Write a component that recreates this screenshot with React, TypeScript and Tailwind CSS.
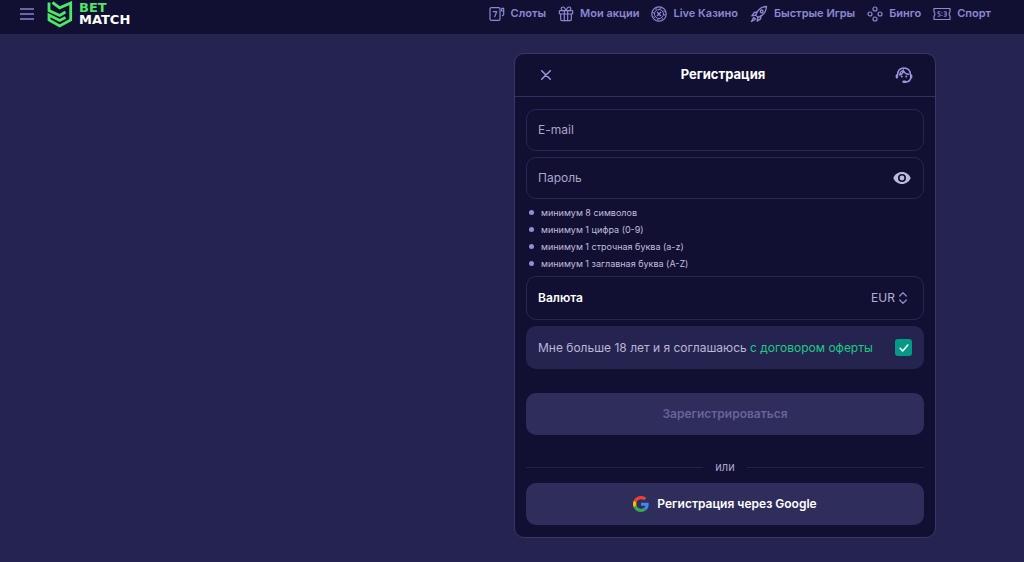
import { useState } from "react";
import type { ReactNode } from "react";

interface NavItem {
  label: string;
  icon: ReactNode;
}

function Icon({ children, className }: { children: ReactNode; className: string }) {
  return (
    <svg
      viewBox="0 0 24 24"
      fill="none"
      stroke="currentColor"
      strokeWidth="1.8"
      strokeLinecap="round"
      strokeLinejoin="round"
      aria-hidden="true"
      className={`shrink-0 ${className}`}
    >
      {children}
    </svg>
  );
}

const SlotsIcon = () => (
  <Icon className="size-4">
    <rect x="1.500" y="2.500" width="15" height="19" rx="2" />
    <path d="M6.500 8.500H11.500L8.500 16" />
    <path d="M20 14.500l2-1.500V3.500h-3v4h3" />
  </Icon>
);

const GiftIcon = () => (
  <Icon className="size-4">
    <rect x="2" y="7" width="20" height="5" rx="1" />
    <path d="M4 12v8a2 2 0 0 0 2 2h12a2 2 0 0 0 2-2v-8M9.500 7v15M14.500 7v15" />
    <path d="M12 7C10.500 3 9 1.500 7.500 1.500a2.700 2.700 0 0 0 0 5.500M12 7c1.500-4 3-5.500 4.500-5.500a2.700 2.700 0 0 1 0 5.500" />
  </Icon>
);

const ChipIcon = () => (
  <Icon className="size-4">
    <circle cx="12" cy="12" r="10.800" />
    <circle cx="12" cy="12" r="8.700" strokeWidth="1.500" strokeDasharray="2.500 4.330" strokeLinecap="butt" />
    <circle cx="12" cy="12" r="6.800" strokeWidth="1.500" />
    <path d="M9.500 9.500l5 5M14.500 9.500l-5 5" strokeWidth="2" />
  </Icon>
);

const RocketIcon = () => (
  <Icon className="size-[18px]">
    <path d="M7.500 13.500C9.500 7.500 14 2.500 22 2 21.500 10 16.500 14.500 10.500 16.500z" />
    <circle cx="15.500" cy="8.500" r="1.800" />
    <path d="M9.500 9.500L5.500 10 2.500 14.500l5-1M14.500 14.500L14 18.500 9.500 21.500l1-5" />
    <path d="M5 16.500L2 22l5.500-3z" />
  </Icon>
);

const BingoIcon = () => (
  <Icon className="size-4">
    <circle cx="12" cy="4.500" r="3" />
    <circle cx="4.500" cy="12" r="3" />
    <circle cx="19.500" cy="12" r="3" />
    <circle cx="12" cy="19.500" r="3" />
  </Icon>
);

const SportIcon = () => (
  <svg viewBox="0 0 18 14" fill="none" stroke="currentColor" aria-hidden="true" className="h-3.5 w-[18px] shrink-0">
    <path d="M1 1.500h16v3.500c-1.200.6-1.200 3.400 0 4v3.500H1V9c1.200-.6 1.200-3.400 0-4z" strokeWidth="1.200" />
    <path d="M7.300 4.800H5v2h1.300q1 0 1 1.200T6.300 9.200H4.800M10.800 4.800h2.400v4.400h-2.400M11.300 7h1.900" strokeWidth="1" />
    <path d="M9 5.300v1M9 8v1" strokeWidth="1" />
  </svg>
);

const SupportIcon = () => (
  <svg viewBox="0 0 24 24" fill="none" stroke="currentColor" strokeLinecap="round" aria-hidden="true" className="size-[18px]">
    <path d="M3.500 12C3 6 7 2.500 12 2.500S21 6 20.500 12" strokeWidth="2" />
    <path d="M2.500 12.500v2.500M21.500 12.500v2.500" strokeWidth="3.200" />
    <path d="M21 16c-.8 3.500-3.500 5.300-7 5.300" strokeWidth="2" />
    <path d="M11.500 21h2" strokeWidth="3.400" />
    <path d="M6.300 12C9.500 11 11 9 11.300 6.200 12.500 9 15 10.800 18 11M6.300 12c.2-3.500 2-5.600 5-5.800" strokeWidth="1.800" />
    <circle cx="9" cy="14" r="1.300" fill="currentColor" stroke="none" />
    <circle cx="15" cy="14" r="1.300" fill="currentColor" stroke="none" />
  </svg>
);

const GoogleIcon = () => (
  <svg viewBox="0 0 48 48" aria-hidden="true" className="size-4">
    <path fill="#EA4335" d="M24 9.500c3.540 0 6.710 1.220 9.210 3.600l6.850-6.850C35.900 2.380 30.470 0 24 0 14.620 0 6.510 5.380 2.560 13.220l7.980 6.190C12.430 13.720 17.740 9.500 24 9.500z" />
    <path fill="#4285F4" d="M46.980 24.550c0-1.570-.15-3.090-.38-4.550H24v9.020h12.940c-.58 2.960-2.260 5.480-4.780 7.180l7.730 6c4.510-4.180 7.090-10.360 7.090-17.650z" />
    <path fill="#FBBC05" d="M10.530 28.590c-.48-1.450-.76-2.990-.76-4.590s.27-3.140.76-4.590l-7.980-6.190C.92 16.460 0 20.120 0 24c0 3.880.92 7.540 2.560 10.780l7.970-6.190z" />
    <path fill="#34A853" d="M24 48c6.480 0 11.930-2.130 15.890-5.810l-7.730-6c-2.150 1.450-4.920 2.300-8.160 2.300-6.260 0-11.570-4.220-13.470-9.910l-7.980 6.190C6.510 42.620 14.620 48 24 48z" />
  </svg>
);

const navItems: NavItem[] = [
  { label: "Слоты", icon: <SlotsIcon /> },
  { label: "Мои акции", icon: <GiftIcon /> },
  { label: "Live Казино", icon: <ChipIcon /> },
  { label: "Быстрые Игры", icon: <RocketIcon /> },
  { label: "Бинго", icon: <BingoIcon /> },
  { label: "Спорт", icon: <SportIcon /> },
];

const passwordRules = [
  "минимум 8 символов",
  "минимум 1 цифра (0-9)",
  "минимум 1 строчная буква (a-z)",
  "минимум 1 заглавная буква (A-Z)",
];

function Header() {
  return (
    <header className="flex h-[34px] items-start justify-between bg-[#111033] pr-[33px] pl-5">
      <div className="flex items-center gap-[13px]">
        <button type="button" aria-label="Меню" className="text-[#8883cc]">
          <svg viewBox="0 0 14 12" stroke="currentColor" strokeWidth="1.400" aria-hidden="true" className="h-3 w-3.5">
            <path d="M0 1h14M0 6h14M0 11h14" />
          </svg>
        </button>
        <a href="#" className="flex h-7 items-center gap-1.5">
          <svg viewBox="0 0 26 27" fill="none" stroke="#4de866" strokeWidth="2.800" aria-hidden="true" className="h-[27px] w-[26px]">
            <path d="M5.500 1.500L12.700 6.800 23.700 2V19L12.700 25 2 19V14L12.700 19.500 18.500 16.500" />
            <path d="M2 1.500V9.500L12.700 14.500 18.500 11" />
          </svg>
          <span className="flex flex-col font-['DejaVu_Sans','Inter',sans-serif] text-[13px] leading-3 font-bold text-white">
            <span className="text-[#4de866]">BET</span>
            <span>MATCH</span>
          </span>
        </a>
      </div>
      <nav className="flex h-[27px] items-center gap-3">
        {navItems.map((item) => (
          <a key={item.label} href="#" className="flex items-center gap-1.5 text-[11px] font-semibold text-[#8d88d0]">
            {item.icon}
            {item.label}
          </a>
        ))}
      </nav>
    </header>
  );
}

function RegistrationForm() {
  const [showPassword, setShowPassword] = useState(false);
  const [agreed, setAgreed] = useState(true);

  return (
    <section className="w-full max-w-[422px] overflow-hidden rounded-[10px] border border-[#39376a] bg-[#111033]">
      <div className="flex h-[43px] items-center justify-between border-b border-[#33315f] pr-[22px] pl-[26px] text-[#9c97dc]">
        <button type="button" aria-label="Закрыть">
          <svg viewBox="0 0 10 10" stroke="currentColor" strokeWidth="1.500" strokeLinecap="round" aria-hidden="true" className="size-2.5">
            <path d="M.7.7l8.600 8.600M9.300.7L.7 9.300" />
          </svg>
        </button>
        <h1 className="text-[13px] font-bold text-white">Регистрация</h1>
        <button type="button" aria-label="Поддержка">
          <SupportIcon />
        </button>
      </div>

      <form className="flex flex-col px-[11px] py-3" onSubmit={(e) => e.preventDefault()}>
        <div className="flex h-[42px] items-center gap-3 rounded-[10px] border border-[#28264f] px-[11px]">
          <label htmlFor="email" className="text-[12px] text-[#a9a6c9]">E-mail</label>
          <input id="email" type="email" className="min-w-0 flex-1 bg-transparent text-[12px] text-white outline-none" />
        </div>

        <div className="mt-1.5 flex h-[42px] items-center gap-3 rounded-[10px] border border-[#28264f] pr-3 pl-[11px]">
          <label htmlFor="password" className="text-[12px] text-[#a9a6c9]">Пароль</label>
          <input
            id="password"
            type={showPassword ? "text" : "password"}
            className="min-w-0 flex-1 bg-transparent text-[12px] text-white outline-none"
          />
          <button type="button" aria-label="Показать пароль" onClick={() => setShowPassword(!showPassword)}>
            <svg viewBox="0 0 18 12" aria-hidden="true" className="h-3 w-[18px]">
              <path
                fill="#bcb9dc"
                fillRule="evenodd"
                d="M9 0C5 0 1.700 2.500.3 6 1.700 9.500 5 12 9 12s7.300-2.500 8.700-6C16.300 2.500 13 0 9 0zm0 10a4 4 0 1 1 0-8 4 4 0 0 1 0 8zm0-6.400a2.400 2.400 0 1 0 0 4.800 2.400 2.400 0 0 0 0-4.800z"
              />
            </svg>
          </button>
        </div>

        <ul className="pt-[5px] pl-[3px] text-[9px] leading-[17px] text-[#c0bddd]">
          {passwordRules.map((rule) => (
            <li key={rule} className="flex items-center gap-[7px]">
              <span className="size-[5px] rounded-full bg-[#928dd8]" />
              {rule}
            </li>
          ))}
        </ul>

        <div className="mt-1 flex h-11 items-center justify-between rounded-[10px] border border-[#28264f] pr-4 pl-[11px]">
          <label htmlFor="currency" className="text-[12px] font-semibold text-white">Валюта</label>
          <div className="flex items-center gap-1">
            <select id="currency" className="appearance-none bg-transparent text-[12px] text-[#b3b0d2] outline-none">
              <option>EUR</option>
            </select>
            <svg viewBox="0 0 8 12" fill="none" stroke="#8f8ad0" strokeWidth="1.300" strokeLinecap="round" strokeLinejoin="round" aria-hidden="true" className="h-3 w-2">
              <path d="M.7 4L4 .8 7.300 4M.7 8L4 11.200 7.300 8" />
            </svg>
          </div>
        </div>

        <div className="mt-1.5 flex h-[43px] items-center justify-between rounded-[10px] bg-[#252450] px-3">
          <label htmlFor="agree" className="text-[12px] text-[#b9b6d8]">
            Мне больше 18 лет и я соглашаюсь{" "}
            <a href="#" className="text-[#1ccb85]">с договором оферты</a>
          </label>
          <span className="grid place-items-center">
            <input
              id="agree"
              type="checkbox"
              checked={agreed}
              onChange={(e) => setAgreed(e.target.checked)}
              className="col-start-1 row-start-1 size-[17px] appearance-none rounded-[3px] bg-[#2f2d5c] checked:bg-[#069a86]"
            />
            {agreed && (
              <svg viewBox="0 0 10 8" fill="none" stroke="#fff" strokeWidth="1.600" strokeLinecap="round" strokeLinejoin="round" aria-hidden="true" className="pointer-events-none col-start-1 row-start-1 h-2 w-2.5">
                <path d="M1.200 4.300l2.500 2.700L8.800 1" />
              </svg>
            )}
          </span>
        </div>

        <button type="submit" disabled className="mt-6 h-[42px] rounded-[10px] bg-[#2f2d5c] text-[12px] font-semibold text-[#676399]">
          Зарегистрироваться
        </button>

        <div className="mt-6 flex h-4 items-center gap-3 text-[11px] text-[#a9a6c9]">
          <span className="h-px flex-1 bg-[#232147]" />
          или
          <span className="h-px flex-1 bg-[#232147]" />
        </div>

        <button type="button" className="mt-2 flex h-[42px] items-center justify-center gap-2 rounded-[10px] bg-[#2f2d5c] text-[12px] font-semibold text-white">
          <GoogleIcon />
          Регистрация через Google
        </button>
      </form>
    </section>
  );
}

export default function App() {
  return (
    <div className="flex min-h-screen flex-col bg-[#252450] font-['Inter','Liberation_Sans',sans-serif]">
      <Header />
      <main className="flex flex-1 items-start justify-end pt-[19px] pr-[88px] pb-6">
        <RegistrationForm />
      </main>
    </div>
  );
}
